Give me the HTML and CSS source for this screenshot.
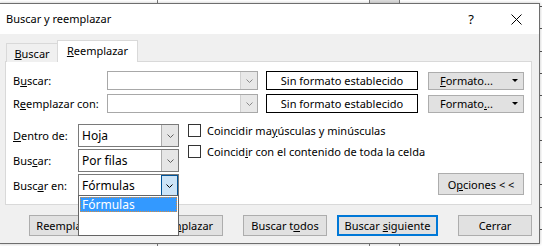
FILE: index.html
```html
<!DOCTYPE html>
<html lang="es">
<head>
    <meta charset="UTF-8">
    <title>Buscar y reemplazar</title>
<link rel="stylesheet" href="styles.css">
</head>
<body>

<div class="dialog">
    <div class="titlebar">
        <span class="title">Buscar y reemplazar</span>
        <span class="title-btn help">?</span>
        <span class="title-btn">
            <svg width="11" height="11" viewBox="0 0 11 11"><path d="M0.5 0.5 L10.5 10.5 M10.5 0.5 L0.5 10.5" stroke="#000" stroke-width="1" fill="none"/></svg>
        </span>
    </div>

    <div class="dialog-body">
        <div class="tabs">
            <div class="tab"><u>B</u>uscar</div>
            <div class="tab active"><u>R</u>eemplazar</div>
        </div>

        <div class="panel">
            <div class="find-row">
                <label class="row-label">B<u>u</u>scar:</label>
                <div class="combo">
                    <span class="combo-arrow"><svg width="7" height="4" viewBox="0 0 7 4"><path d="M0.5 0.5 L3.5 3.5 L6.5 0.5" stroke="#8a8a8a" fill="none"/></svg></span>
                </div>
                <div class="format-box">Sin formato establecido</div>
                <button class="btn format-btn"><span><u>F</u>ormato...</span><span class="tri"></span></button>
            </div>
            <div class="find-row">
                <label class="row-label">R<u>e</u>emplazar con:</label>
                <div class="combo">
                    <span class="combo-arrow"><svg width="7" height="4" viewBox="0 0 7 4"><path d="M0.5 0.5 L3.5 3.5 L6.5 0.5" stroke="#8a8a8a" fill="none"/></svg></span>
                </div>
                <div class="format-box">Sin formato establecido</div>
                <button class="btn format-btn"><span>Formato<u>.</u>..</span><span class="tri"></span></button>
            </div>

            <div class="search-opts">
                <div class="select-grid">
                    <label class="row-label"><u>D</u>entro de:</label>
                    <div class="select">
                        <span>Hoja</span>
                        <span class="select-arrow"><svg width="7" height="4" viewBox="0 0 7 4"><path d="M0.5 0.5 L3.5 3.5 L6.5 0.5" stroke="#606060" fill="none"/></svg></span>
                    </div>
                    <label class="row-label">Bus<u>c</u>ar:</label>
                    <div class="select">
                        <span>Por filas</span>
                        <span class="select-arrow"><svg width="7" height="4" viewBox="0 0 7 4"><path d="M0.5 0.5 L3.5 3.5 L6.5 0.5" stroke="#606060" fill="none"/></svg></span>
                    </div>
                    <label class="row-label">Busc<u>a</u>r en:</label>
                    <div class="select focused">
                        <span>Fórmulas</span>
                        <span class="select-arrow"><svg width="7" height="4" viewBox="0 0 7 4"><path d="M0.5 0.5 L3.5 3.5 L6.5 0.5" stroke="#000" fill="none"/></svg></span>
                    </div>
                </div>

                <div class="opt-col">
                    <label class="check"><span class="box"></span>Coincidir ma<u>y</u>úsculas y minúsculas</label>
                    <label class="check"><span class="box"></span>Coincid<u>i</u>r con el contenido de toda la celda</label>
                    <button class="btn options-btn">O<u>p</u>ciones &lt; &lt;</button>
                </div>
            </div>
        </div>

        <div class="actions">
            <button class="btn act-replace-all">Reemplazar t<u>o</u>dos</button>
            <button class="btn act-replace">Ree<u>m</u>plazar</button>
            <button class="btn act-find-all">Buscar t<u>o</u>dos</button>
            <button class="btn act-find-next default">Buscar <u>s</u>iguiente</button>
            <button class="btn act-close">Cerrar</button>
        </div>
    </div>

    <!-- open list of "Buscar en" -->
    <div class="dropdown">
        <div class="dropdown-item">Fórmulas</div>
    </div>
</div>

</body>
</html>
```

FILE: styles.css
```css
* {
  box-sizing: border-box;
}

body {
  margin: 0;
  height: 246px;
  overflow: hidden;
  font-family: "Noto Sans", sans-serif;
  font-size: 11px;
  color: #000;
  background-color: #fff;
  background-image:
    linear-gradient(#dcdcdc, #dcdcdc),
    linear-gradient(#7b7b7b, #7b7b7b),
    linear-gradient(#7b7b7b, #7b7b7b),
    linear-gradient(#7b7b7b, #7b7b7b),
    repeating-linear-gradient(to bottom, transparent 0 6px, #555 6px 7px, transparent 7px 22.3px);
  background-size: 29px 3px, 1px 100%, 1px 100%, 1px 100%, 100% 100%;
  background-position: 370px 0, 157px 0, 369px 0, 399px 0, 0 0;
  background-repeat: no-repeat;
}

u {
  text-decoration: underline;
  text-underline-offset: 1px;
}

.dialog {
  position: relative;
  margin-top: 3px;
  margin-left: -1px;
  width: 541px;
  height: 241px;
  background: #f0f0f0;
  border: 1px solid #6e6e6e;
  box-shadow: 0 0 3px rgba(0, 0, 0, 0.25);
}

.titlebar {
  display: flex;
  align-items: center;
  height: 30px;
  background: #fff;
}

.title {
  padding-left: 6px;
  font-size: 11px;
  margin-right: auto;
  margin-top: -1px;
}

.title-btn {
  width: 46px;
  height: 30px;
  display: flex;
  align-items: center;
  justify-content: center;
}

.help {
  font-size: 13px;
  padding-left: 2px;
}

.dialog-body {
  padding: 6px 7px 0 5px;
}

.tabs {
  display: flex;
  align-items: flex-end;
  height: 22px;
  position: relative;
  z-index: 1;
}

.tab {
  height: 19px;
  width: 52px;
  margin-left: 1px;
  border: 1px solid #d9d9d9;
  border-bottom: none;
  background: #f0f0f0;
  display: flex;
  align-items: center;
  justify-content: center;
  padding-top: 1px;
}

.tab.active {
  height: 22px;
  width: 81px;
  margin-left: -1px;
  background: #fff;
  padding-top: 0;
  padding-bottom: 2px;
}

.panel {
  margin-top: -1px;
  border: 1px solid #d9d9d9;
  background: #fff;
  padding: 9px 7px 7px 7px;
}

.find-row {
  display: flex;
  align-items: center;
  height: 19px;
}

.find-row + .find-row {
  margin-top: 4px;
}

.row-label {
  width: 94px;
}

.combo {
  width: 151px;
  height: 19px;
  border: 1px solid #a8a8a8;
  display: flex;
  justify-content: flex-end;
}

.combo-arrow {
  width: 17px;
  background: #e8e8e8;
  border-left: 1px solid #d0d0d0;
  display: flex;
  align-items: center;
  justify-content: center;
}

.format-box {
  margin-left: 8px;
  width: 152px;
  height: 19px;
  border: 1px solid #000;
  display: flex;
  align-items: center;
  justify-content: center;
}

.btn {
  font-family: inherit;
  font-size: 11px;
  color: #000;
  background: #e1e1e1;
  border: 1px solid #adadad;
  padding: 0;
  height: 21px;
}

.format-btn {
  margin-left: 10px;
  width: 96px;
  height: 18px;
  display: flex;
  align-items: center;
  justify-content: space-between;
  padding: 0 5px 0 11px;
}

.tri {
  width: 0;
  height: 0;
  border-left: 3px solid transparent;
  border-right: 3px solid transparent;
  border-top: 3px solid #000;
}

.search-opts {
  display: flex;
  margin-top: 11px;
}

.select-grid {
  display: grid;
  grid-template-columns: 65px 101px;
  row-gap: 2px;
  align-items: center;
}

.select-grid .row-label {
  width: auto;
}

.select {
  height: 23px;
  border: 1px solid #7a7a7a;
  display: flex;
  align-items: center;
  justify-content: space-between;
  padding-left: 3px;
  font-size: 12px;
}

.select-arrow {
  width: 17px;
  height: 21px;
  background: #e6e6e6;
  border-left: 1px solid #adadad;
  display: flex;
  align-items: center;
  justify-content: center;
}

.select.focused .select-arrow {
  background: #cce4f7;
  border: 1px solid #005499;
  height: 21px;
}

.opt-col {
  flex: 1;
  margin-left: 9px;
  display: flex;
  flex-direction: column;
  align-items: flex-start;
}

.check {
  display: flex;
  align-items: center;
  height: 13px;
}

.check + .check {
  margin-top: 8px;
}

.box {
  width: 13px;
  height: 13px;
  border: 1px solid #333;
  background: #fff;
  margin-right: 6px;
}

.options-btn {
  margin-top: auto;
  margin-bottom: 2px;
  align-self: flex-end;
  width: 86px;
  height: 22px;
}

.actions {
  display: flex;
  margin-top: 10px;
  padding-left: 24px;
}

.act-replace-all {
  width: 108px;
}

.act-replace {
  width: 81px;
  margin-left: 5px;
}

.act-find-all {
  width: 84px;
  margin-left: 20px;
}

.act-find-next {
  width: 101px;
  margin-left: 10px;
}

.act-close {
  width: 74px;
  margin-left: 20px;
}

.btn.default {
  border: 2px solid #0078d7;
}

.dropdown {
  position: absolute;
  left: 78px;
  top: 191px;
  width: 101px;
  height: 41px;
  background: #fff;
  border: 1px solid #646464;
  padding: 1px;
  z-index: 2;
}

.dropdown-item {
  height: 15px;
  background: #3399ff;
  outline: 1px dotted #d98c3c;
  outline-offset: -1px;
  color: #fff;
  padding-left: 2px;
  font-size: 12px;
  line-height: 15px;
}
```
